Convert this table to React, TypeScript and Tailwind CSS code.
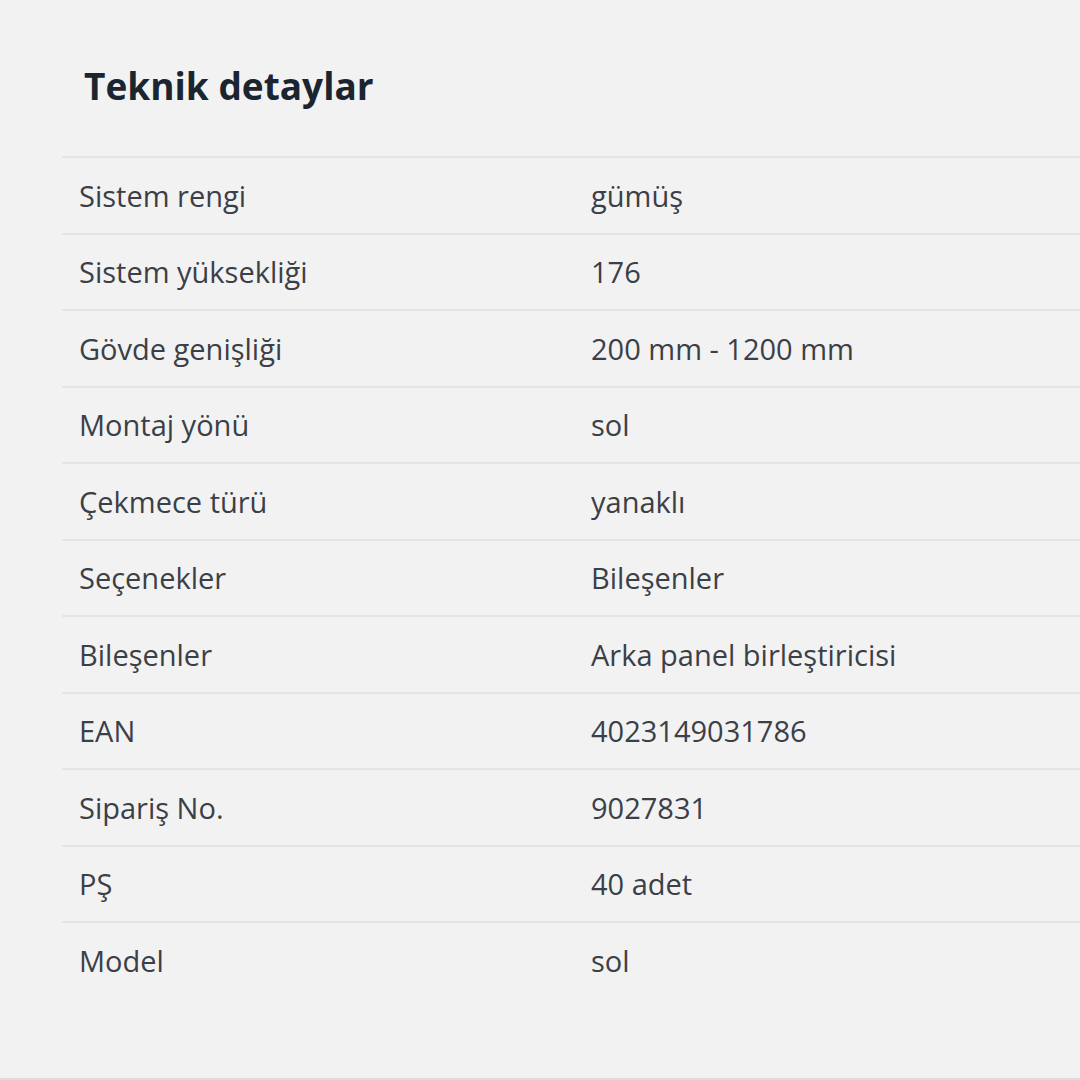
import React from "react";

const rows: [string, string][] = [
  ["Sistem rengi", "gümüş"],
  ["Sistem yüksekliği", "176"],
  ["Gövde genişliği", "200 mm - 1200 mm"],
  ["Montaj yönü", "sol"],
  ["Çekmece türü", "yanaklı"],
  ["Seçenekler", "Bileşenler"],
  ["Bileşenler", "Arka panel birleştiricisi"],
  ["EAN", "4023149031786"],
  ["Sipariş No.", "9027831"],
  ["PŞ", "40 adet"],
  ["Model", "sol"],
];

export default function App() {
  return (
    <div
      className="w-[1080px] h-[1080px] bg-[#f2f2f2] border-b-2 border-[#dcdcdc] overflow-hidden"
      style={{ fontFamily: '"Open Sans", "Noto Sans", sans-serif' }}
    >
      <div className="pl-[62px] pt-[60px]">
        <h2 className="pl-[22px] text-[37px] leading-[52px] font-bold text-[#1b2530] h-[96px]">
          Teknik detaylar
        </h2>
        <div>
          {rows.map(([k, v]) => (
            <div
              key={k}
              className="flex items-center h-[76.5px] border-t-2 border-[#e5e5e5] text-[29px] text-[#3b3f47]"
            >
              <div className="w-[529px] pl-[17px]">{k}</div>
              <div>{v}</div>
            </div>
          ))}
        </div>
      </div>
    </div>
  );
}
